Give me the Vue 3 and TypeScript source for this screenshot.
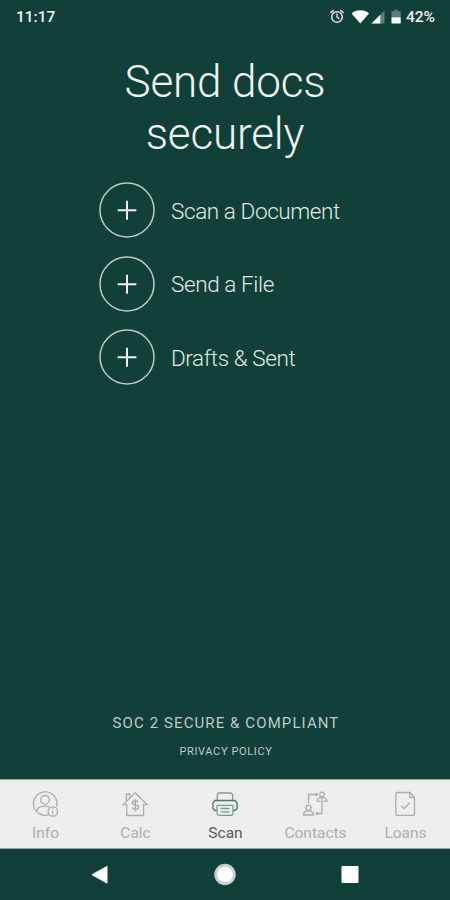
<script setup lang="ts">
type TabIcon = 'info' | 'calc' | 'scan' | 'contacts' | 'loans'

interface Tab {
  label: string
  icon: TabIcon
}

const actions: string[] = ['Scan a Document', 'Send a File', 'Drafts & Sent']

const tabs: Tab[] = [
  { label: 'Info', icon: 'info' },
  { label: 'Calc', icon: 'calc' },
  { label: 'Scan', icon: 'scan' },
  { label: 'Contacts', icon: 'contacts' },
  { label: 'Loans', icon: 'loans' },
]

const activeTab: TabIcon = 'scan'
</script>

<template>
  <div class="screen">
    <header class="status">
      <span class="clock">11:17</span>
      <svg class="status-icons" width="74" height="20" viewBox="0 0 74 20">
        <g fill="none" stroke="#d5dedb" stroke-width="1.6">
          <circle cx="8" cy="11" r="5.3" />
          <path d="M8 7.5v3.7l2.4 1.6" stroke-width="1.4" />
          <path d="M1.4 6.8l3.3-2.6M14.6 6.8l-3.3-2.6" />
        </g>
        <path d="M22.6 7.4C27 3.3 35.6 3.3 40 7.4L31.3 17.5z" fill="#fff" />
        <path d="M55.5 4.5V17.5H42.5z" fill="#5d7f79" />
        <path d="M51.3 8.7V17.5H42.5z" fill="#fff" />
        <path d="M65.5 3.8h3v1.5h3.2v6.2h-9.2V5.3h3z" fill="#5d7f79" />
        <path d="M62.5 11.3h9.2v6.2h-9.2z" fill="#fff" />
      </svg>
      <span class="battery">42%</span>
    </header>

    <main class="content">
      <h1 class="title">Send docs<br />securely</h1>
      <ul class="actions">
        <li v-for="action in actions" :key="action" class="action">
          <svg class="plus" width="56" height="56" viewBox="0 0 56 56" fill="none">
            <circle cx="28" cy="28" r="27" stroke="#bccac4" stroke-width="1.5" />
            <path d="M28 18.7v19M18.7 28.2h18.6" stroke="#f1f3f1" stroke-width="2" />
          </svg>
          <span class="action-label">{{ action }}</span>
        </li>
      </ul>
      <footer class="legal">
        <p class="compliance">SOC 2 SECURE &amp; COMPLIANT</p>
        <p class="privacy">PRIVACY POLICY</p>
      </footer>
    </main>

    <nav class="tabs">
      <div
        v-for="tab in tabs"
        :key="tab.icon"
        class="tab"
        :class="{ active: tab.icon === activeTab }"
      >
        <svg class="tab-icon" width="28" height="28" viewBox="0 0 28 28">
          <g v-if="tab.icon === 'info'">
            <path d="M18.7 24.4A11.7 11.7 0 1 1 25.4 17" />
            <circle cx="14" cy="9.8" r="4.3" />
            <path d="M5.7 21.6c.5-3.3 3.6-5.4 8.3-5.4 1.8 0 3.3.3 4.5.9" />
            <circle cx="21.8" cy="21.5" r="4.7" />
            <path d="M21.8 20.7v3.2M21.8 18.6v1.1" />
          </g>
          <g v-else-if="tab.icon === 'calc'">
            <path d="M2.3 14.6L14 2.7l12.2 11.9h-3.6v10.9H5.8V14.6zM5.4 11.3V4h3.4v3.7" />
            <path d="M17.3 12.3c-.4-1-1.5-1.500-3-1.500-1.900 0-3 .7-3 2 0 3.300 6.300 1.300 6.300 4.400 0 1.300-1.300 2-3.200 2-1.800 0-3-.6-3.400-1.700M14.300 9v12.300" stroke-width="1.4" />
          </g>
          <g v-else-if="tab.icon === 'scan'">
            <path class="soft" d="M6.3 10V4.7L8 3h12l1.7 1.7V10" />
            <path d="M6 20.5H4L1.900 18.400V13L4 10.500h20l2.100 2.500v5.400L24 20.500h-2" />
            <path class="soft" d="M6.1 15.3h15.8v8.6L20.5 25.4H7.5L6.1 23.9z" />
            <path class="soft" d="M9.5 18.5h9M9.5 21.8h9" />
          </g>
          <g v-else-if="tab.icon === 'contacts'">
            <path d="M7.5 13.5V4.5h8.7M14.7 3l1.6 1.5L14.7 6M21 13v10.5h-6M16.5 22l-1.6 1.5 1.6 1.5" />
            <circle cx="21" cy="4.4" r="2.2" />
            <path d="M16.2 11.3c0-2.600 1.900-3.900 4.800-3.900s4.800 1.300 4.800 3.900h-3.200M19.400 11.300h-3.200M21 8v5" />
            <circle cx="7.5" cy="17.8" r="2.6" />
            <path d="M2.5 25c0-2.700 1.700-4.200 5-4.200s5 1.500 5 4.200z" />
          </g>
          <g v-else>
            <path d="M6.3 2.5h12.7l4.500 4.700v16.300q0 1.900-1.900 1.900H6.700q-1.900 0-1.900-1.900V4.300q0-1.800 1.500-1.800zM18.800 2.800v4.500h4.400" />
            <path d="M10 15.8l2.7 2.7 6.1-5.8" />
          </g>
        </svg>
        <span class="tab-label">{{ tab.label }}</span>
      </div>
    </nav>

    <div class="system-nav">
      <svg width="20" height="20" viewBox="0 0 20 20">
        <path d="M2 9.7L17 1.5v16.6z" fill="#fff" stroke="#fff" stroke-width="1" stroke-linejoin="round" />
      </svg>
      <svg width="24" height="24" viewBox="0 0 24 24">
        <circle cx="12" cy="11.5" r="10" fill="#fff" stroke="#c4cecb" stroke-width="1.5" />
        <circle cx="12" cy="11.5" r="8.5" fill="none" stroke="#91a19e" stroke-width=".7" />
      </svg>
      <svg width="20" height="20" viewBox="0 0 20 20">
        <rect x="1.5" y="1" width="17" height="17" rx="1" fill="#fff" />
      </svg>
    </div>
  </div>
</template>

<style>
body {
  margin: 0;
  background: #104038;
}
</style>

<style scoped>
.screen {
  display: flex;
  flex-direction: column;
  width: 450px;
  height: 900px;
  overflow: hidden;
  background: #104038;
  color: #f1f3f1;
  font-family: Roboto, sans-serif;
}

.status {
  display: flex;
  align-items: center;
  box-sizing: border-box;
  height: 32px;
  padding: 1px 15px 0 16px;
  font-size: 15.5px;
  font-weight: 500;
}

.clock {
  flex: 1;
}

.status-icons {
  margin-right: 3px;
  margin-bottom: 2px;
}

.content {
  display: flex;
  flex: 1;
  flex-direction: column;
}

.title {
  margin: 24px 0 0;
  font-size: 44px;
  font-weight: 300;
  line-height: 52px;
  letter-spacing: -0.15px;
  text-align: center;
}

.actions {
  display: flex;
  flex-direction: column;
  gap: 17.5px;
  margin: 22px 0 0;
  padding: 0 0 0 99px;
  list-style: none;
}

.action {
  display: flex;
  align-items: center;
  gap: 16px;
  height: 56px;
}

.action-label {
  padding-top: 1px;
  color: #e2e8e5;
  font-size: 22.5px;
  font-weight: 300;
  letter-spacing: -0.4px;
}

.legal {
  margin-top: auto;
  padding: 0 0 19px 2px;
  color: #bdccca;
  text-align: center;
}

.legal p {
  margin: 0;
}

.compliance {
  font-size: 15px;
  line-height: 20px;
  letter-spacing: 1.1px;
}

.privacy {
  padding-top: 11px;
  font-size: 11px;
  line-height: 16px;
  letter-spacing: 0.64px;
}

.tabs {
  display: grid;
  grid-template-columns: repeat(5, 1fr);
  box-sizing: border-box;
  height: 70px;
  border-top: 1px solid #9aa9a5;
  border-bottom: 1px solid #9aa9a5;
  background: #eee;
  color: #adadad;
}

.tab {
  display: flex;
  flex-direction: column;
  align-items: center;
  padding: 10px 0 0 1px;
}

.tab-icon {
  margin-right: 1px;
  fill: none;
  stroke: currentColor;
  stroke-width: 1.3;
}

.tab-label {
  padding-top: 6px;
  font-size: 15.5px;
  line-height: 18px;
  letter-spacing: 0;
}

.active .tab-icon {
  color: #45786f;
}

.active .soft {
  stroke: #7b9d96;
}

.active .tab-label {
  color: #545c5a;
}

.system-nav {
  display: flex;
  align-items: center;
  justify-content: space-between;
  height: 51px;
  padding: 0 90px;
}
</style>
